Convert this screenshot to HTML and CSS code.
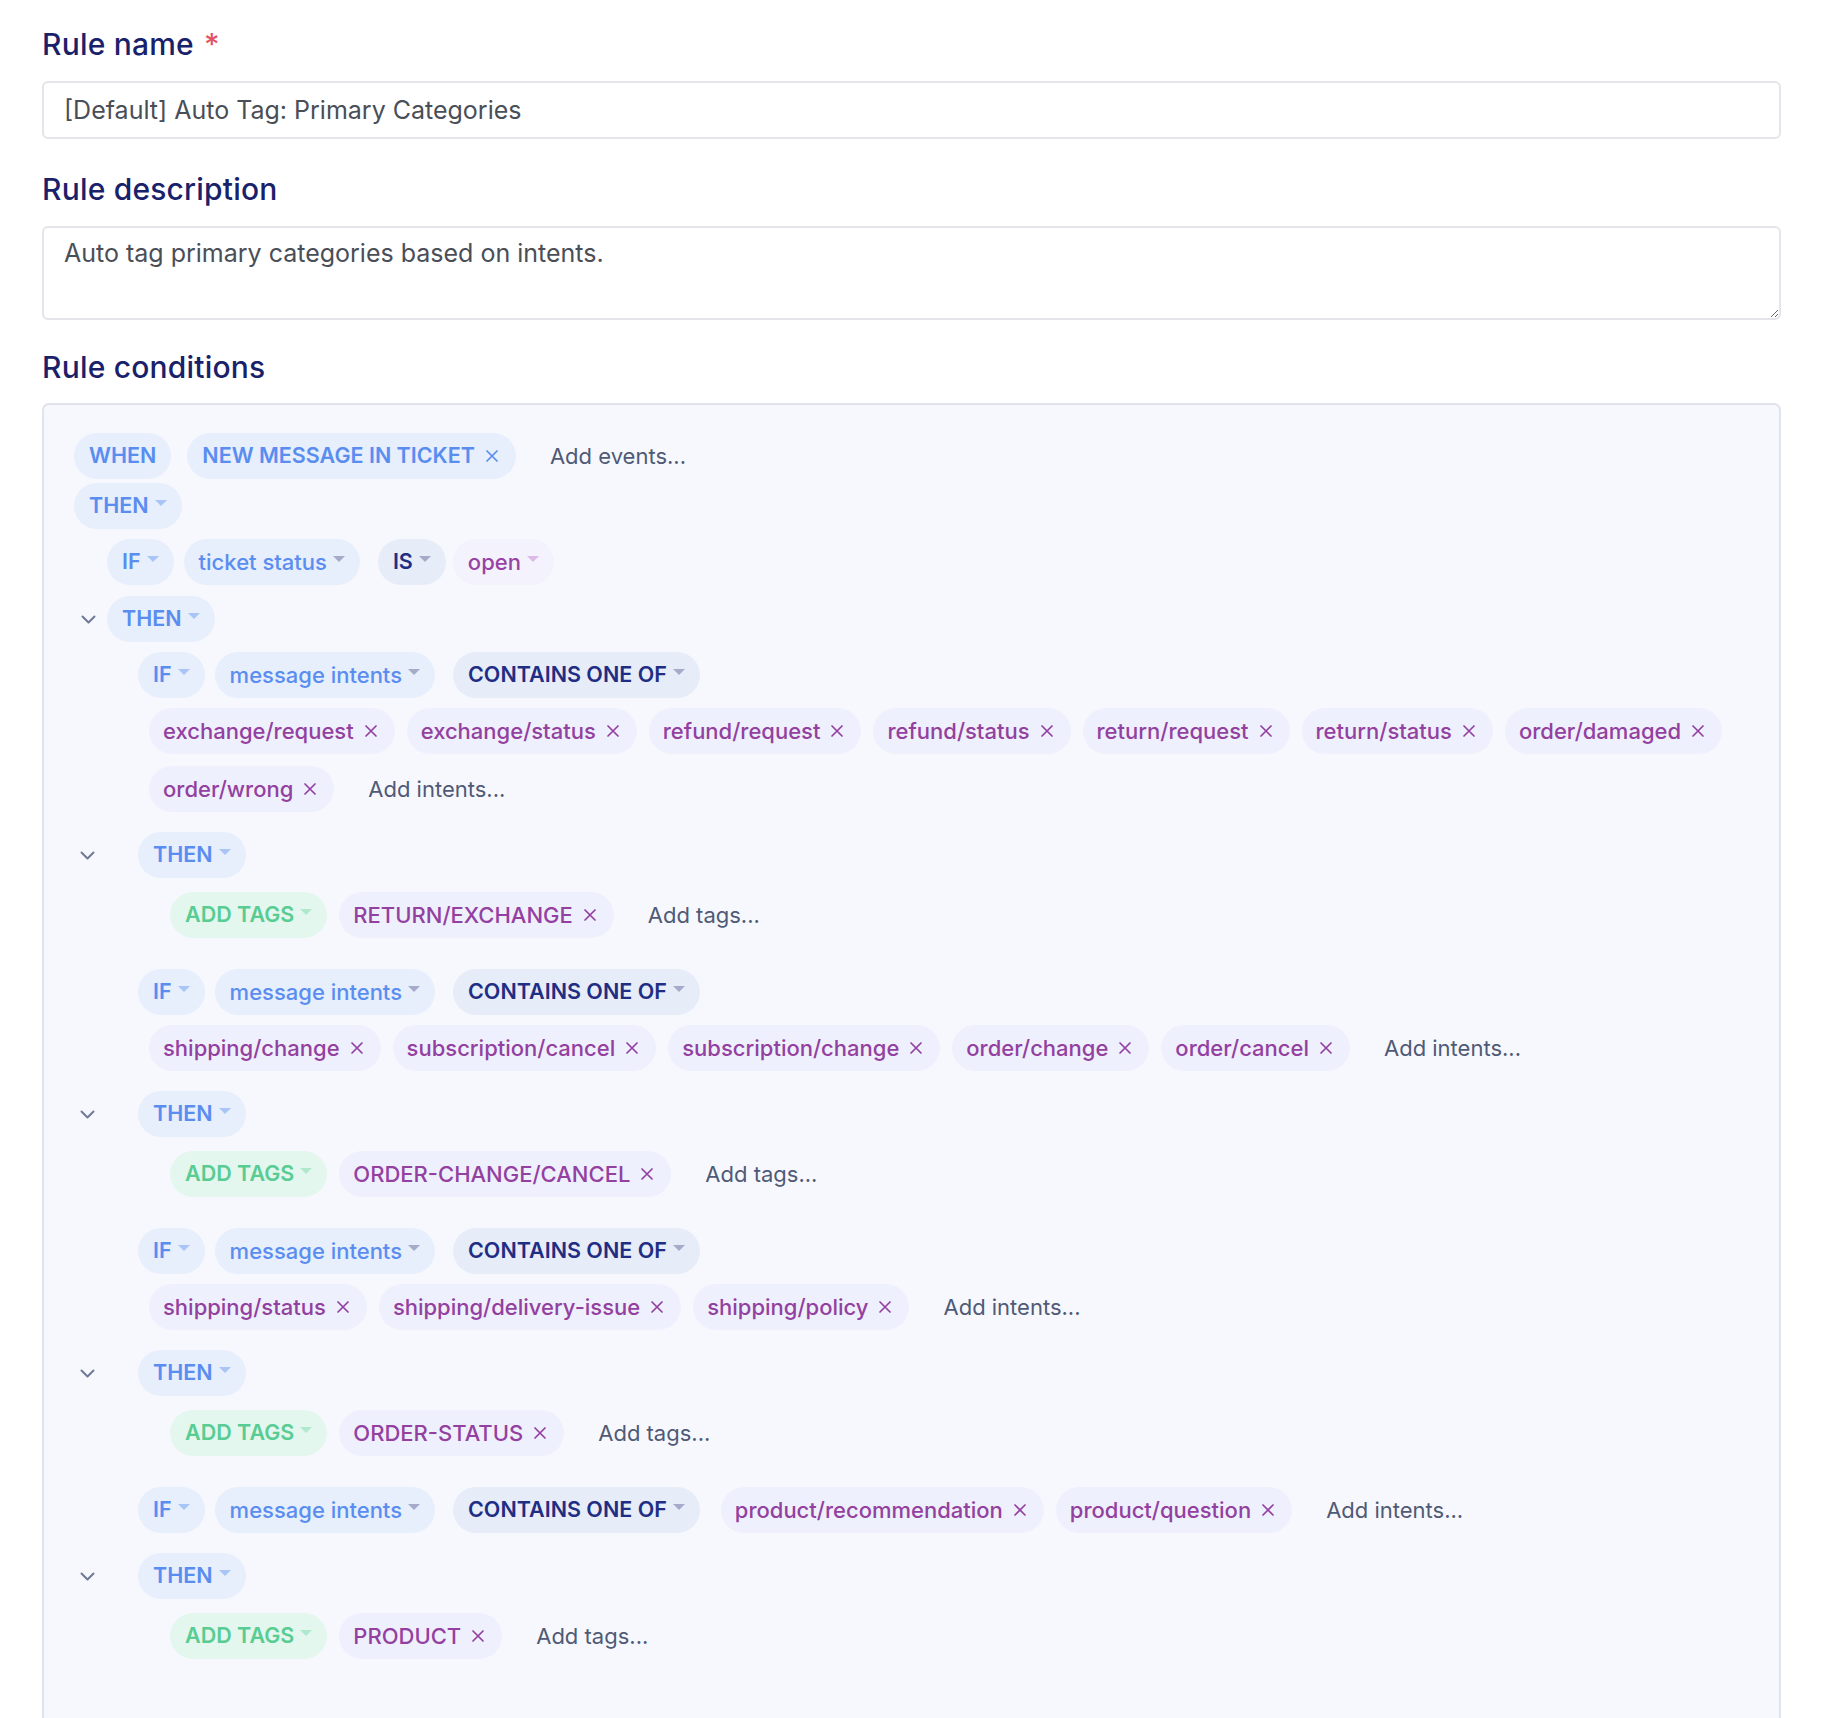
FILE: index.html
```
<!DOCTYPE html>
<html lang="en">
<head>
<meta charset="utf-8">
<title>Rule editor</title>
<link rel="stylesheet" href="styles.css">
</head>
<body>
<div class="page">
  <label class="label">Rule name <span class="req">*</span></label>
  <input class="field" type="text" value="[Default] Auto Tag: Primary Categories">

  <label class="label mt-label">Rule description</label>
  <textarea class="field area">Auto tag primary categories based on intents.</textarea>

  <label class="label mt-label2">Rule conditions</label>
  <div class="conditions">
    <div class="row when-row">
      <span class="pill blue bold">WHEN</span>
      <span class="pill blue bold tag">NEW MESSAGE IN TICKET<svg class="x" viewBox="0 0 14 14"><path d="M2 2L12 12M12 2L2 12"/></svg></span>
      <span class="add add-ev">Add events...</span>
    </div>
    <div class="row mt4">
      <span class="pill blue bold">THEN<span class="caret c-blue"></span></span>
    </div>
    <div class="level2">
      <div class="row cond mt10">
        <span class="pill blue bold">IF<span class="caret c-blue"></span></span>
        <span class="pill blue med">ticket status<span class="caret c-gray"></span></span>
        <span class="pill navy bold op">IS<span class="caret c-gray"></span></span>
        <span class="pill lav purple med val">open<span class="caret c-pink"></span></span>
      </div>
      <div class="then-row l2 mt11">
        <span class="chev-slot"><svg class="chev" viewBox="0 0 15 9"><path d="M1.5 1.5L7.5 7.5L13.5 1.5"/></svg></span>
        <span class="pill blue bold">THEN<span class="caret c-blue"></span></span>
      </div>
      <div class="level3">
        <!-- group 1 -->
        <div class="group first">
          <div class="row cond">
            <span class="pill blue bold">IF<span class="caret c-blue"></span></span>
            <span class="pill blue med">message intents<span class="caret c-gray"></span></span>
            <span class="pill navy bold op">CONTAINS ONE OF<span class="caret c-gray"></span></span>
            <div class="tags">
              <span class="pill tagp">exchange/request<svg class="x" viewBox="0 0 14 14"><path d="M2 2L12 12M12 2L2 12"/></svg></span>
              <span class="pill tagp">exchange/status<svg class="x" viewBox="0 0 14 14"><path d="M2 2L12 12M12 2L2 12"/></svg></span>
              <span class="pill tagp">refund/request<svg class="x" viewBox="0 0 14 14"><path d="M2 2L12 12M12 2L2 12"/></svg></span>
              <span class="pill tagp">refund/status<svg class="x" viewBox="0 0 14 14"><path d="M2 2L12 12M12 2L2 12"/></svg></span>
              <span class="pill tagp">return/request<svg class="x" viewBox="0 0 14 14"><path d="M2 2L12 12M12 2L2 12"/></svg></span>
              <span class="pill tagp">return/status<svg class="x" viewBox="0 0 14 14"><path d="M2 2L12 12M12 2L2 12"/></svg></span>
              <span class="pill tagp">order/damaged<svg class="x" viewBox="0 0 14 14"><path d="M2 2L12 12M12 2L2 12"/></svg></span>
              <span class="pill tagp">order/wrong<svg class="x" viewBox="0 0 14 14"><path d="M2 2L12 12M12 2L2 12"/></svg></span>
              <span class="add add-in">Add intents...</span>
            </div>
          </div>
          <div class="then-row l3 mt20">
            <span class="chev-slot"><svg class="chev" viewBox="0 0 15 9"><path d="M1.5 1.5L7.5 7.5L13.5 1.5"/></svg></span>
            <span class="pill blue bold">THEN<span class="caret c-blue"></span></span>
          </div>
          <div class="action">
            <span class="pill green bold">ADD TAGS<span class="caret c-green"></span></span>
            <span class="pill tagp">RETURN/EXCHANGE<svg class="x" viewBox="0 0 14 14"><path d="M2 2L12 12M12 2L2 12"/></svg></span>
            <span class="add">Add tags...</span>
          </div>
        </div>
        <!-- group 2 -->
        <div class="group">
          <div class="row cond">
            <span class="pill blue bold">IF<span class="caret c-blue"></span></span>
            <span class="pill blue med">message intents<span class="caret c-gray"></span></span>
            <span class="pill navy bold op">CONTAINS ONE OF<span class="caret c-gray"></span></span>
            <div class="tags">
              <span class="pill tagp">shipping/change<svg class="x" viewBox="0 0 14 14"><path d="M2 2L12 12M12 2L2 12"/></svg></span>
              <span class="pill tagp">subscription/cancel<svg class="x" viewBox="0 0 14 14"><path d="M2 2L12 12M12 2L2 12"/></svg></span>
              <span class="pill tagp">subscription/change<svg class="x" viewBox="0 0 14 14"><path d="M2 2L12 12M12 2L2 12"/></svg></span>
              <span class="pill tagp">order/change<svg class="x" viewBox="0 0 14 14"><path d="M2 2L12 12M12 2L2 12"/></svg></span>
              <span class="pill tagp">order/cancel<svg class="x" viewBox="0 0 14 14"><path d="M2 2L12 12M12 2L2 12"/></svg></span>
              <span class="add add-in">Add intents...</span>
            </div>
          </div>
          <div class="then-row l3 mt20">
            <span class="chev-slot"><svg class="chev" viewBox="0 0 15 9"><path d="M1.5 1.5L7.5 7.5L13.5 1.5"/></svg></span>
            <span class="pill blue bold">THEN<span class="caret c-blue"></span></span>
          </div>
          <div class="action">
            <span class="pill green bold">ADD TAGS<span class="caret c-green"></span></span>
            <span class="pill tagp">ORDER-CHANGE/CANCEL<svg class="x" viewBox="0 0 14 14"><path d="M2 2L12 12M12 2L2 12"/></svg></span>
            <span class="add">Add tags...</span>
          </div>
        </div>
        <!-- group 3 -->
        <div class="group">
          <div class="row cond">
            <span class="pill blue bold">IF<span class="caret c-blue"></span></span>
            <span class="pill blue med">message intents<span class="caret c-gray"></span></span>
            <span class="pill navy bold op">CONTAINS ONE OF<span class="caret c-gray"></span></span>
            <div class="tags">
              <span class="pill tagp">shipping/status<svg class="x" viewBox="0 0 14 14"><path d="M2 2L12 12M12 2L2 12"/></svg></span>
              <span class="pill tagp">shipping/delivery-issue<svg class="x" viewBox="0 0 14 14"><path d="M2 2L12 12M12 2L2 12"/></svg></span>
              <span class="pill tagp">shipping/policy<svg class="x" viewBox="0 0 14 14"><path d="M2 2L12 12M12 2L2 12"/></svg></span>
              <span class="add add-in">Add intents...</span>
            </div>
          </div>
          <div class="then-row l3 mt20">
            <span class="chev-slot"><svg class="chev" viewBox="0 0 15 9"><path d="M1.5 1.5L7.5 7.5L13.5 1.5"/></svg></span>
            <span class="pill blue bold">THEN<span class="caret c-blue"></span></span>
          </div>
          <div class="action">
            <span class="pill green bold">ADD TAGS<span class="caret c-green"></span></span>
            <span class="pill tagp">ORDER-STATUS<svg class="x" viewBox="0 0 14 14"><path d="M2 2L12 12M12 2L2 12"/></svg></span>
            <span class="add">Add tags...</span>
          </div>
        </div>
        <!-- group 4 -->
        <div class="group">
          <div class="row cond">
            <span class="pill blue bold">IF<span class="caret c-blue"></span></span>
            <span class="pill blue med">message intents<span class="caret c-gray"></span></span>
            <span class="pill navy bold op">CONTAINS ONE OF<span class="caret c-gray"></span></span>
            <div class="tags">
              <span class="pill tagp">product/recommendation<svg class="x" viewBox="0 0 14 14"><path d="M2 2L12 12M12 2L2 12"/></svg></span>
              <span class="pill tagp">product/question<svg class="x" viewBox="0 0 14 14"><path d="M2 2L12 12M12 2L2 12"/></svg></span>
              <span class="add add-in">Add intents...</span>
            </div>
          </div>
          <div class="then-row l3 mt20">
            <span class="chev-slot"><svg class="chev" viewBox="0 0 15 9"><path d="M1.5 1.5L7.5 7.5L13.5 1.5"/></svg></span>
            <span class="pill blue bold">THEN<span class="caret c-blue"></span></span>
          </div>
          <div class="action">
            <span class="pill green bold">ADD TAGS<span class="caret c-green"></span></span>
            <span class="pill tagp">PRODUCT<svg class="x" viewBox="0 0 14 14"><path d="M2 2L12 12M12 2L2 12"/></svg></span>
            <span class="add">Add tags...</span>
          </div>
        </div>
      </div>
    </div>
  </div>
</div>
</body>
</html>
```

FILE: styles.css
```
* { box-sizing: border-box; }
html, body { margin: 0; padding: 0; background: #ffffff; }
body { font-family: Inter, "Noto Sans", sans-serif; color: #1a216a; }

.page { padding: 26px 45px 0 42px; }

.label {
  display: block;
  font-size: 30px;
  line-height: 36px;
  font-weight: 500;
  letter-spacing: 0.2px;
  color: #19216b;
}
.req { color: #e25468; margin-left: 2px; }
.mt-label { margin-top: 32px; }
.mt-label2 { margin-top: 29px; }

.field {
  display: block;
  width: 100%;
  margin-top: 19px;
  height: 58px;
  border: 2px solid #e4e5ea;
  border-radius: 6px;
  background: #fff;
  padding: 0 20px;
  font-family: Inter, "Noto Sans", sans-serif;
  font-size: 25px;
  color: #4a4e57;
  outline: none;
}
.area {
  height: 94px;
  padding: 7px 20px;
  line-height: 36px;
  resize: vertical;
}

.conditions {
  margin-top: 18px;
  background: #f7f8fd;
  border: 2px solid #e0e3e9;
  border-radius: 7px;
  padding: 28px 30px 160px 30px;
}

.row {
  display: flex;
  align-items: center;
  flex-wrap: wrap;
  column-gap: 10px;
  row-gap: 10px;
}
.mt4 { margin-top: 4px; }
.mt10 { margin-top: 10px; }
.mt11 { margin-top: 11px; }
.mt20 { margin-top: 20px; }

.when-row { column-gap: 16px; }
.add-ev { margin-left: 18px; }

.pill {
  display: inline-flex;
  align-items: center;
  height: 46px;
  padding: 0 15px;
  border-radius: 23px;
  font-size: 22px;
  line-height: 1;
  white-space: nowrap;
  flex: none;
}
.bold { font-weight: 600; font-size: 21.5px; }
.med { font-weight: 500; }
.blue { background: #e7eefc; color: #5a8df0; }
.navy { background: #e6ecf8; color: #1f2e84; }
.lav { background: #f3f2fd; }
.purple { color: #9842a5; }
.green { background: #e4f7ee; color: #58cc92; }
.tagp {
  background: #eef0fd;
  color: #9340a0;
  font-weight: 500;
  padding: 0 17px 0 14px;
}
.tag { padding: 0 17px 0 15px; }

.op { margin-left: 8px; }
.val { margin-left: -3px; }

.caret {
  display: inline-block;
  width: 0;
  height: 0;
  border-left: 6px solid transparent;
  border-right: 6px solid transparent;
  border-top: 6px solid #a9c5f5;
  margin-left: 6px;
  margin-bottom: 7px;
}
.c-blue { border-top-color: #a9c5f5; }
.c-gray { border-top-color: #a6abca; }
.c-pink { border-top-color: #dcb9e7; }
.c-green { border-top-color: #b0e8cd; }

.x {
  width: 14px;
  height: 14px;
  margin-left: 10px;
  fill: none;
  stroke: currentColor;
  stroke-width: 1.7;
  stroke-linecap: round;
}

.add {
  font-size: 22px;
  color: #4f5a76;
  white-space: nowrap;
  padding-left: 22px;
}
.when-row .add { padding-left: 0; }
.add-in { min-width: 330px; }

.level2 { padding-left: 33px; }
.level3 { padding-left: 31px; }

.then-row {
  display: flex;
  align-items: center;
}
.chev-slot { display: flex; align-items: center; flex: none; }
.chev {
  width: 15px;
  height: 9px;
  fill: none;
  stroke: #717a95;
  stroke-width: 2;
  stroke-linecap: round;
  stroke-linejoin: round;
}
.l2 { margin-left: -26px; }
.l2 .chev-slot { width: 26px; }
.l3 { margin-left: -58px; }
.l3 .chev-slot { width: 58px; }

.group { margin-top: 31px; }
.group.first { margin-top: 10px; }

.tags {
  display: flex;
  flex-wrap: wrap;
  align-items: center;
  column-gap: 12px;
  row-gap: 12px;
  margin-left: 11px;
  min-width: 0;
}

.action {
  display: flex;
  align-items: center;
  column-gap: 12px;
  margin-top: 14px;
  margin-left: 32px;
}
```
